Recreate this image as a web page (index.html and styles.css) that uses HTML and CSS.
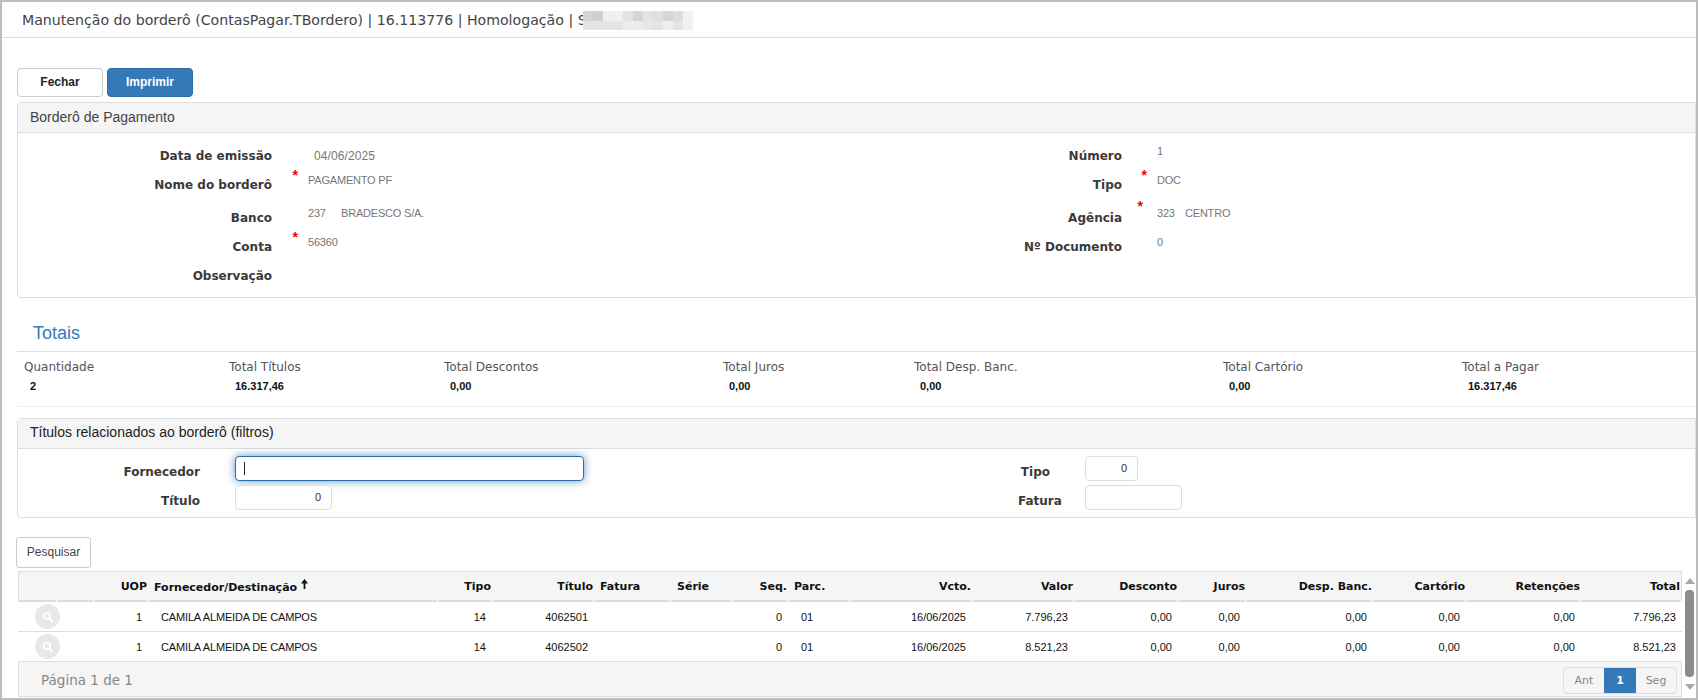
FILE: index.html
```html
<!DOCTYPE html>
<html lang="pt-BR">
<head>
<meta charset="utf-8">
<title>Manutenção do borderô</title>
<link rel="stylesheet" href="styles.css">
</head>
<body>
<div class="page">
  <header class="topbar">
    <span class="topbar-text">Manutenção do borderô (ContasPagar.TBordero) | 16.113776 | Homologação | S</span>
    <span class="mosaic"><i></i><i></i><i></i><i></i><i></i><i></i><i></i><i></i><i></i><i></i><i></i><i></i><i></i><i></i><i></i><i></i><i></i><i></i><i></i><i></i><i></i><i></i></span>
  </header>

  <div class="actions">
    <button class="btn">Fechar</button>
    <button class="btn btn-primary">Imprimir</button>
  </div>

  <section class="panel panel-bordero">
    <div class="panel-head">Borderô de Pagamento</div>
    <div class="form-grid">
      <div class="fg-col">
        <div class="f r1"><label>Data de emissão</label><div class="val v-date">04/06/2025</div></div>
        <div class="f r2"><label>Nome do borderô</label><b class="req">*</b><div class="val">PAGAMENTO PF</div></div>
        <div class="f r3"><label>Banco</label><div class="val"><span class="code">237</span>BRADESCO S/A.</div></div>
        <div class="f r4"><label>Conta</label><b class="req">*</b><div class="val">56360</div></div>
        <div class="f r5"><label>Observação</label></div>
      </div>
      <div class="fg-col fg-right">
        <div class="f r1"><label>Número</label><div class="val v-num">1</div></div>
        <div class="f r2"><label>Tipo</label><b class="req">*</b><div class="val">DOC</div></div>
        <div class="f r3"><label>Agência</label><b class="req req-wide">*</b><div class="val"><span class="code code-sm">323</span>CENTRO</div></div>
        <div class="f r4"><label>Nº Documento</label><div class="val">0</div></div>
      </div>
    </div>
  </section>

  <section class="totais">
    <h2>Totais</h2>
    <div class="tot-row">
      <div class="tot t1"><span>Quantidade</span><strong>2</strong></div>
      <div class="tot t2"><span>Total Títulos</span><strong>16.317,46</strong></div>
      <div class="tot t3"><span>Total Descontos</span><strong>0,00</strong></div>
      <div class="tot t4"><span>Total Juros</span><strong>0,00</strong></div>
      <div class="tot t5"><span>Total Desp. Banc.</span><strong>0,00</strong></div>
      <div class="tot t6"><span>Total Cartório</span><strong>0,00</strong></div>
      <div class="tot t7"><span>Total a Pagar</span><strong>16.317,46</strong></div>
    </div>
  </section>

  <section class="panel panel-filter">
    <div class="panel-head panel-head-dark">Títulos relacionados ao borderô (filtros)</div>
    <div class="filter-grid">
      <div class="flt flt-a"><label>Fornecedor</label><div class="input input-focus"><span class="caret"></span></div></div>
      <div class="flt flt-b"><label>Tipo</label><div class="input input-tipo">0</div></div>
      <div class="flt flt-c"><label>Título</label><div class="input input-titulo">0</div></div>
      <div class="flt flt-d"><label>Fatura</label><div class="input input-fatura"></div></div>
    </div>
  </section>

  <button class="btn-search">Pesquisar</button>

  <div class="grid-wrap">
    <div class="grid-main">
      <table class="grid">
        <colgroup>
          <col class="c0"><col class="c1"><col class="c2"><col class="c3"><col class="c4"><col class="c5"><col class="c6"><col class="c7"><col class="c8"><col class="c9"><col class="c10"><col class="c11"><col class="c12"><col class="c13"><col class="c14"><col class="c15"><col class="c16"><col class="c17">
        </colgroup>
        <thead>
          <tr>
            <th></th><th></th><th class="r">UOP</th><th class="l">Fornecedor/Destinação<svg class="sort" width="9" height="12" viewBox="0 0 9 12"><path d="M4.5 1 L1 5.5 H3.6 V11 H5.4 V5.5 H8 Z" fill="#111"/></svg></th><th class="r">Tipo</th><th class="r">Título</th><th class="l">Fatura</th><th class="l">Série</th><th class="r">Seq.</th><th class="l">Parc.</th><th class="r">Vcto.</th><th class="r">Valor</th><th class="r">Desconto</th><th class="r">Juros</th><th class="r">Desp. Banc.</th><th class="r">Cartório</th><th class="r">Retenções</th><th class="r">Total</th>
          </tr>
        </thead>
        <tbody>
          <tr>
            <td class="act" colspan="2"><span class="lens"><svg width="12" height="12" viewBox="0 0 12 12"><circle cx="5" cy="5" r="3.2" fill="none" stroke="#fff" stroke-width="1.8"/><path d="M7.5 7.5 L10.5 10.5" stroke="#fff" stroke-width="2"/></svg></span></td>
            <td class="r">1</td><td class="l tn nm">CAMILA ALMEIDA DE CAMPOS</td><td class="r">14</td><td class="r">4062501</td><td></td><td></td><td class="r">0</td><td class="l tn">01</td><td class="r">16/06/2025</td><td class="r">7.796,23</td><td class="r">0,00</td><td class="r">0,00</td><td class="r">0,00</td><td class="r">0,00</td><td class="r">0,00</td><td class="r">7.796,23</td>
          </tr>
          <tr>
            <td class="act" colspan="2"><span class="lens"><svg width="12" height="12" viewBox="0 0 12 12"><circle cx="5" cy="5" r="3.2" fill="none" stroke="#fff" stroke-width="1.8"/><path d="M7.5 7.5 L10.5 10.5" stroke="#fff" stroke-width="2"/></svg></span></td>
            <td class="r">1</td><td class="l tn nm">CAMILA ALMEIDA DE CAMPOS</td><td class="r">14</td><td class="r">4062502</td><td></td><td></td><td class="r">0</td><td class="l tn">01</td><td class="r">16/06/2025</td><td class="r">8.521,23</td><td class="r">0,00</td><td class="r">0,00</td><td class="r">0,00</td><td class="r">0,00</td><td class="r">0,00</td><td class="r">8.521,23</td>
          </tr>
        </tbody>
      </table>
      <div class="grid-foot">
        <span class="pageinfo">Página 1 de 1</span>
        <div class="pager"><span class="pg">Ant</span><span class="pg pg-on">1</span><span class="pg">Seg</span></div>
      </div>
    </div>
    <div class="scroll">
      <svg class="arrow" width="10" height="6" viewBox="0 0 10 6"><path d="M5 0 L10 6 H0 Z" fill="#a8a8a8"/></svg>
      <div class="thumb"></div>
      <svg class="arrow" width="10" height="6" viewBox="0 0 10 6"><path d="M0 0 H10 L5 6 Z" fill="#a8a8a8"/></svg>
    </div>
  </div>
</div>
</body>
</html>
```
FILE: styles.css
```css
* { box-sizing: border-box; }
html, body { margin: 0; padding: 0; background: #fff; }
body { width: 1698px; height: 700px; overflow: hidden; font-family: "Liberation Sans", Arial, sans-serif; color: #333; }
.page { width: 1698px; height: 700px; border: 2px solid #bdbdbd; overflow: hidden; background: #fff; }

.topbar { height: 36px; border-bottom: 1px solid #ddd; display: flex; align-items: center; padding-left: 20px; white-space: nowrap; font-family: "DejaVu Sans", sans-serif; font-size: 14.15px; color: #444; }
.topbar-text { width: 561px; overflow: hidden; flex: none; }
.mosaic { display: grid; grid-template-columns: repeat(11, 10px); grid-auto-rows: 9.5px; width: 110px; margin-top: 2px; }
.mosaic i { background: #e4e4e4; }
.mosaic i:nth-child(1) { background: #d5d5d3; }
.mosaic i:nth-child(2) { background: #cfcfcd; }
.mosaic i:nth-child(3) { background: #eceef0; }
.mosaic i:nth-child(4) { background: #eef0f1; }
.mosaic i:nth-child(5) { background: #e2e2e2; }
.mosaic i:nth-child(6) { background: #d4d6d5; }
.mosaic i:nth-child(7) { background: #e3e3e1; }
.mosaic i:nth-child(8) { background: #dfdfdf; }
.mosaic i:nth-child(9) { background: #d5d6d6; }
.mosaic i:nth-child(10) { background: #dededc; }
.mosaic i:nth-child(11) { background: #eff1f3; }
.mosaic i:nth-child(16) { background: #ededed; }
.mosaic i:nth-child(17) { background: #ebebe9; }
.mosaic i:nth-child(18) { background: #e7e7e7; }
.mosaic i:nth-child(20) { background: #efefef; }
.mosaic i:nth-child(22) { background: #f0f2f2; }

.actions { display: flex; gap: 4px; padding: 30px 0 0 15px; }
.btn { width: 86px; height: 29px; border: 1px solid #ccc; border-radius: 4px; background: #fff; color: #222; font: bold 12px "Liberation Sans", sans-serif; padding: 0 0 1px; }
.btn-primary { background: #337ab7; border-color: #2e6da4; color: #fff; }

.panel { margin-left: 15px; border: 1px solid #ddd; border-radius: 4px 0 0 4px; }
.panel-head { height: 30px; background: #f5f5f5; border-bottom: 1px solid #ddd; padding: 0 12px; font-family: "Liberation Sans", sans-serif; font-size: 14px; color: #444; line-height: 28px; }
.panel-head-dark { color: #222; line-height: 27px; }
.panel-bordero { margin-top: 5px; height: 196px; }

.form-grid { display: grid; grid-template-columns: 1000px 1fr; }
.fg-col { height: 164px; }
.f { display: grid; grid-template-columns: 254px 36px 1fr; height: 29px; }
.fg-right .f { grid-template-columns: 104px 35px 1fr; }
.f label { grid-column: 1; text-align: right; font: bold 12px "DejaVu Sans", sans-serif; color: #3a3a3a; padding-top: 15px; line-height: 16px; white-space: nowrap; }
.f .val { grid-column: 3; font-size: 11px; letter-spacing: -.2px; color: #777; line-height: 14px; padding-top: 11px; white-space: nowrap; }
.req { grid-column: 2; grid-row: 1; color: #e00; font: bold 14px "Liberation Sans", sans-serif; justify-self: end; margin-right: 10px; padding-top: 5px; }
.req-wide { margin-right: 14px; padding-top: 3px; }
.code { display: inline-block; width: 33px; }
.code-sm { width: 28px; }
.r2 { height: 33px; }
.f .v-date { padding-left: 6px; padding-top: 16px; font-size: 12px; letter-spacing: .1px; }
.f .v-num { padding-top: 11px; }

.totais { margin-left: 15px; margin-top: 15px; }
.totais h2 { margin: 0; font: normal 18px "Liberation Sans", sans-serif; color: #337ab7; padding-left: 16px; height: 39px; line-height: 40px; border-bottom: 1px solid #ddd; }
.tot-row { position: relative; height: 55px; border-bottom: 1px solid #eee; }
.tot { position: absolute; top: 8px; display: flex; flex-direction: column; white-space: nowrap; }
.tot span { font: 12px "DejaVu Sans", sans-serif; color: #555; line-height: 15px; }
.tot strong { font: bold 11px "Liberation Sans", sans-serif; color: #111; padding-left: 6px; margin-top: 4px; line-height: 14px; }
.t1 { left: 7px; } .t2 { left: 212px; } .t3 { left: 427px; } .t4 { left: 706px; } .t5 { left: 897px; } .t6 { left: 1206px; } .t7 { left: 1445px; }

.panel-filter { margin-top: 11px; height: 100px; }
.filter-grid { display: grid; grid-template-columns: 1000px 1fr; grid-auto-rows: 29px; padding-top: 7px; }
.flt { display: grid; grid-template-columns: 182px 1fr; column-gap: 35px; height: 25px; }
.flt-b, .flt-d { grid-template-columns: 32px 1fr; column-gap: 35px; }
.flt label { text-align: right; font: bold 12px "DejaVu Sans", sans-serif; color: #3a3a3a; line-height: 16px; padding-top: 8px; }
.input { height: 25px; border: 1px solid #ddd; border-radius: 4px; background: #fff; font: 11px "Liberation Sans", sans-serif; color: #333; text-align: right; padding: 5px 10px 0; }
.input-focus { width: 349px; border-color: #2e6da4; box-shadow: 0 0 8px rgba(51,122,183,.8); padding-left: 8px; text-align: left; }
.caret { display: block; width: 1px; height: 13px; background: #222; }
.input-tipo { width: 53px; }
.input-titulo { width: 97px; }
.input-fatura { width: 97px; }

.btn-search { display: block; margin: 19px 0 0 14px; width: 75px; height: 31px; border: 1px solid #ccc; border-radius: 3px; background: #fff; font: 12px "Liberation Sans", sans-serif; color: #444; padding: 0 0 2px; }

.grid-wrap { display: flex; margin: 3px 0 0 16px; }
.grid-main { width: 1664px; }
.grid { width: 1664px; table-layout: fixed; border-collapse: separate; border-spacing: 0; font: 11px "Liberation Sans", sans-serif; color: #111; }
.grid th { position: relative; height: 31px; background: #f5f5f5; border-top: 1px solid #ddd; border-bottom: 2px solid #ddd; font: bold 11px "DejaVu Sans", sans-serif; color: #111; padding: 0; white-space: nowrap; }
.grid th::after { content: ""; position: absolute; right: 0; bottom: -2px; width: 1px; height: 2px; background: #fff; }
.grid th:first-child { border-left: 1px solid #ddd; }
.grid th:last-child { border-right: 1px solid #ddd; }
.grid td { height: 30px; border-bottom: 1px solid #ddd; padding: 0 6px 0 0; white-space: nowrap; }
.grid .r { text-align: right; }
.grid .l { text-align: left; }
.grid td.tn { padding-left: 13px; }
.grid td.nm { letter-spacing: -.15px; }
.grid th.r { padding-right: 1px; }
.grid th.l { padding-left: 6px; }
.sort { margin-left: 3px; vertical-align: 1px; }
.c0 { width: 39px; } .c1 { width: 37px; } .c2 { width: 54px; } .c3 { width: 290px; } .c4 { width: 54px; } .c5 { width: 102px; } .c6 { width: 77px; } .c7 { width: 62px; } .c8 { width: 55px; } .c9 { width: 62px; } .c10 { width: 122px; } .c11 { width: 102px; } .c12 { width: 104px; } .c13 { width: 68px; } .c14 { width: 127px; } .c15 { width: 93px; } .c16 { width: 115px; } .c17 { width: 101px; }
.grid td.act { padding: 0; }
.lens { display: flex; align-items: center; justify-content: center; width: 25px; height: 25px; margin-left: 17px; border-radius: 50%; background: #e8e8e8; }

.grid-foot { height: 35px; background: #f5f5f5; border: 1px solid #ddd; border-top: 0; display: flex; justify-content: space-between; padding: 5px 4px 0 22px; }
.pageinfo { font: 13.5px "DejaVu Sans", sans-serif; color: #888; line-height: 18px; padding-top: 4px; }
.pager { display: flex; height: 27px; border: 1px solid #ddd; border-radius: 4px; overflow: hidden; background: #f5f5f5; }
.pg { font: 11px "DejaVu Sans", sans-serif; color: #888; line-height: 25px; text-align: center; width: 40px; }
.pg-on { width: 32px; background: #337ab7; color: #fff; font-weight: bold; }

.scroll { width: 14px; margin-left: 1px; display: flex; flex-direction: column; align-items: center; padding-top: 7px; gap: 6px; }
.thumb { width: 9px; height: 87px; background: #8c8c8c; border-radius: 4px; margin-bottom: 1px; flex: none; }
.arrow { flex: none; }
```
